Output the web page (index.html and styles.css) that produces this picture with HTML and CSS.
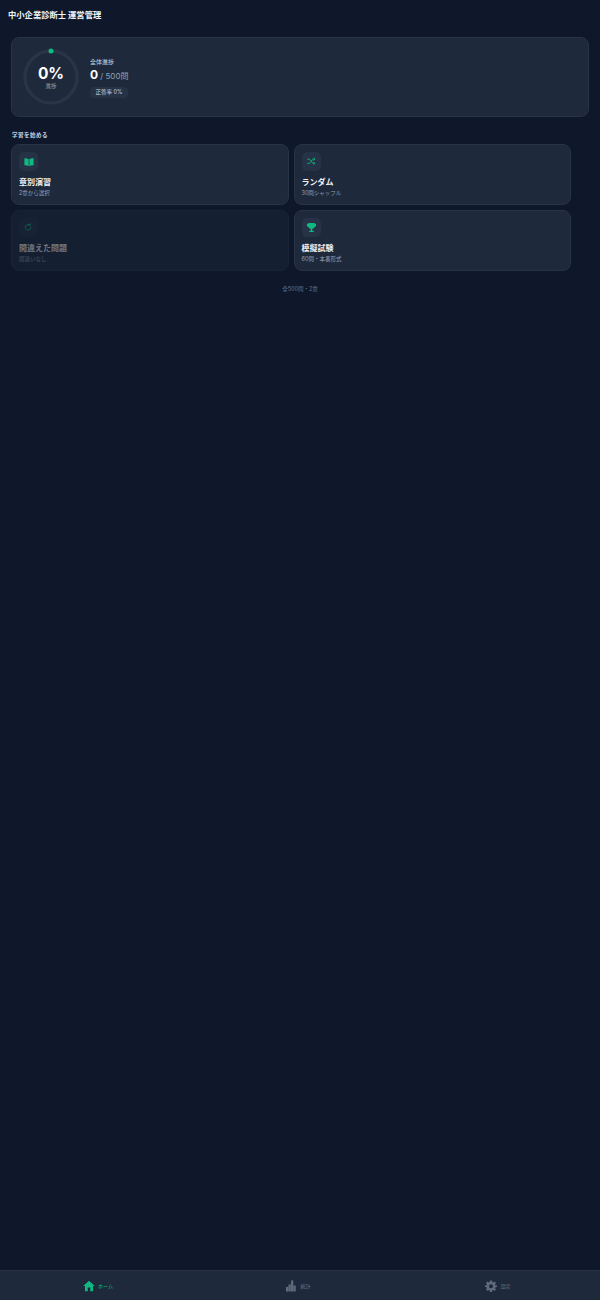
FILE: index.html
```html
<!DOCTYPE html>
<html lang="ja">
<head>
<meta charset="utf-8">
<title>中小企業診断士 運営管理</title>
<link rel="stylesheet" href="styles.css">
</head>
<body>
<div class="app">
  <header class="header"><h1 class="app-title">中小企業診断士 運営管理</h1></header>
  <main class="main">
    <section class="hero">
      <div class="ring">
        <svg class="ring-svg" viewBox="0 0 58 58" width="58" height="58" aria-hidden="true">
          <circle cx="29" cy="29" r="26" fill="none" stroke="#283546" stroke-width="3.5"/>
          <circle cx="29" cy="3" r="2.5" fill="#10b981"/>
        </svg>
        <div class="ring-label"><span class="ring-pct">0%</span><span class="ring-sub">進捗</span></div>
      </div>
      <div class="hero-info">
        <div class="hero-cap">全体進捗</div>
        <div class="hero-count"><b class="count-num">0</b><span class="count-rest"> / 500問</span></div>
        <div class="pill">正答率 0%</div>
      </div>
    </section>
    <h2 class="section-title">学習を始める</h2>
    <div class="grid">
      <div class="card">
        <div class="icon-box">
          <svg viewBox="0 0 24 24" width="10" height="10" aria-hidden="true"><path fill="#10b981" d="M1 3c3.600-.4 7.600.2 10.200 2.200V22c-2.800-1.800-6.600-2.400-10.200-2zM23 3c-3.600-.4-7.600.2-10.200 2.200V22c2.800-1.800 6.600-2.400 10.200-2z"/></svg>
        </div>
        <div class="card-title">章別演習</div>
        <div class="card-sub">2章から選択</div>
      </div>
      <div class="card">
        <div class="icon-box">
          <svg viewBox="0 0 24 24" width="8.500" height="8.500" fill="none" stroke="#10b981" stroke-width="2.600" stroke-linecap="round" stroke-linejoin="round" aria-hidden="true"><path d="M2 6h4c5 0 7 12 12 12h4M2 18h4c2 0 3.500-2 4.500-4M13.500 10c1-2 2.500-4 4.500-4h4M19 3l3 3-3 3M19 15l3 3-3 3"/></svg>
        </div>
        <div class="card-title">ランダム</div>
        <div class="card-sub">30問シャッフル</div>
      </div>
      <div class="card card-off">
        <div class="icon-box">
          <svg viewBox="0 0 24 24" width="8.500" height="8.500" fill="none" stroke="#10b981" stroke-width="2.600" stroke-linecap="round" aria-hidden="true"><path d="M20 12a8 8 0 1 1-3-6.200"/><path d="M17.500 1.500v5h-5"/></svg>
        </div>
        <div class="card-title">間違えた問題</div>
        <div class="card-sub">間違いなし</div>
      </div>
      <div class="card">
        <div class="icon-box">
          <svg viewBox="0 0 24 24" width="11" height="11" aria-hidden="true"><path fill="#10b981" d="M5 2h14v2h3v2c0 3-1.500 5-3.800 5.600-1 2.200-2.600 3.500-4.700 3.900V19h3.500v3h-10v-3h3.500v-3.500c-2.100-.4-3.700-1.700-4.700-3.900C3.500 11 2 9 2 6V4h3z"/></svg>
        </div>
        <div class="card-title">模擬試験</div>
        <div class="card-sub">60問・本番形式</div>
      </div>
    </div>
    <p class="foot-note">全500問・2章</p>
  </main>
  <nav class="nav">
    <div class="nav-item nav-active">
      <svg viewBox="0 0 24 24" width="12" height="12" aria-hidden="true"><path fill="#10b981" d="M12 1.500 0.500 12H4v10.500h5.500V15h5v7.500H20V12h3.500z"/></svg>
      <span>ホーム</span>
    </div>
    <div class="nav-item">
      <svg viewBox="0 0 24 24" width="12" height="12" aria-hidden="true"><path fill="#5f6b7b" d="M2 14h4.500v9H2zM7 9h4.500v14H7zM12 1h4.500v22H12zM17 11h4.500v12H17z"/></svg>
      <span>統計</span>
    </div>
    <div class="nav-item">
      <svg viewBox="0 0 24 24" width="12" height="12" aria-hidden="true"><path fill="#5f6b7b" fill-rule="evenodd" d="M10 1h4l.6 3.200 1.700.7L19 3l3 3-1.900 2.700.7 1.700L24 11v3l-3.200.6-.7 1.700L22 19l-3 3-2.700-1.900-1.700.7L14 24h-4l-.6-3.200-1.700-.7L5 22l-3-3 1.900-2.700-.7-1.700L0 14v-3l3.200-.6.7-1.700L2 6l3-3 2.700 1.900 1.700-.7zM12 8.500a4 4 0 1 0 0 8 4 4 0 0 0 0-8z"/></svg>
      <span>設定</span>
    </div>
  </nav>
</div>
</body>
</html>
```
FILE: styles.css
```css
* { box-sizing: border-box; }
html, body { margin: 0; padding: 0; }
body {
  background: #0f172a;
  color: #fff;
  font-family: Inter, "Noto Sans CJK JP", sans-serif;
}
.app {
  height: 1300px;
  display: flex;
  flex-direction: column;
  background: #0e182a;
}
.header { padding: 9px 8px 0; height: 37px; }
.app-title {
  margin: 0;
  font-size: 8.300px;
  line-height: 13px;
  font-weight: 700;
  color: #f1f4f7;
}
.main { flex: 1; padding: 0 11px; }
.hero {
  height: 80px;
  display: flex;
  align-items: center;
  gap: 10px;
  padding: 0 10px;
  background: #1e293b;
  border: 1px solid #273446;
  border-radius: 8px;
}
.ring { position: relative; width: 58px; height: 58px; flex: none; }
.ring-svg { display: block; }
.ring-label {
  position: absolute;
  inset: 0;
  padding-top: 1px;
  display: flex;
  flex-direction: column;
  align-items: center;
  justify-content: center;
}
.ring-pct { font-size: 15.500px; line-height: 17px; font-weight: 700; color: #fff; }
.ring-sub { font-size: 5.500px; line-height: 8px; color: #94a3b8; }
.hero-info { display: flex; flex-direction: column; align-items: flex-start; margin-bottom: 2px; }
.hero-cap { font-size: 6px; line-height: 13px; color: #cbd5e1; }
.hero-count { margin-top: -2px; line-height: 15px; }
.count-num { font-size: 12px; font-weight: 700; color: #fff; }
.count-rest { font-size: 8px; color: #94a3b8; }
.pill {
  margin-top: 3px;
  padding: 0 5.500px;
  height: 11px;
  line-height: 11px;
  font-size: 5.500px;
  color: #cbd5e1;
  background: #263245;
  border-radius: 4px;
}
.section-title {
  margin: 14px 0 0;
  padding-left: 1px;
  height: 13px;
  font-size: 5.500px;
  line-height: 8px;
  font-weight: 600;
  letter-spacing: .5px;
  color: #cbd5e1;
}
.grid {
  width: 560px;
  display: grid;
  grid-template-columns: 1fr 1fr;
  gap: 5px;
}
.card {
  height: 61px;
  padding: 7px;
  background: #1e293b;
  border: 1px solid #273446;
  border-radius: 8px;
}
.card-off { opacity: .42; }
.icon-box {
  width: 19px;
  height: 19px;
  display: flex;
  align-items: center;
  justify-content: center;
  background: #263245;
  border-radius: 5px;
}
.card-title {
  margin-top: 5px;
  font-size: 8px;
  line-height: 13px;
  font-weight: 700;
  color: #f1f4f7;
}
.card-sub { font-size: 5.500px; line-height: 8px; color: #94a3b8; }
.foot-note {
  margin: 14px 0 0;
  text-align: center;
  font-size: 5.500px;
  line-height: 8px;
  color: #64748b;
}
.nav {
  height: 30px;
  display: flex;
  background: #1e293b;
  border-top: 1px solid #263245;
}
.nav-item {
  flex: 1;
  display: flex;
  align-items: center;
  justify-content: center;
  gap: 3px;
  padding-right: 4px;
  font-size: 5px;
  color: #717c8b;
}
.nav-active { color: #10b981; }
```
